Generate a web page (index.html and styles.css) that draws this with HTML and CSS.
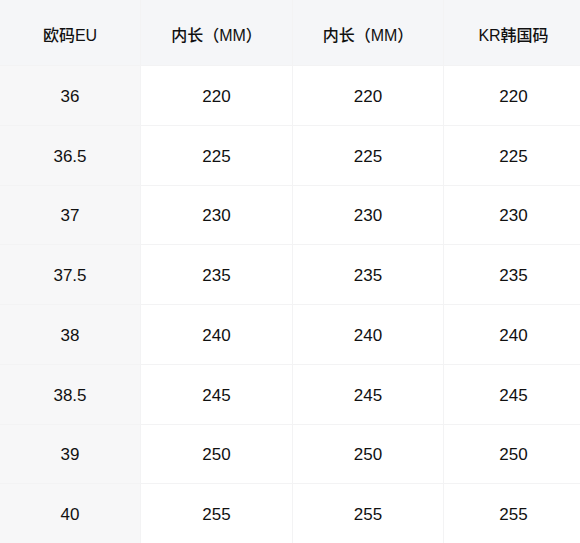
FILE: index.html
```html
<!DOCTYPE html>
<html lang="zh">
<head>
<meta charset="utf-8">
<title>尺码表</title>
<link rel="stylesheet" href="styles.css">
</head>
<body>
<div class="table">
  <div class="cell head first">欧码EU</div>
  <div class="cell head">内长（MM）</div>
  <div class="cell head">内长（MM）</div>
  <div class="cell head">KR韩国码</div>

  <div class="cell first">36</div><div class="cell">220</div><div class="cell">220</div><div class="cell">220</div>
  <div class="cell first">36.5</div><div class="cell">225</div><div class="cell">225</div><div class="cell">225</div>
  <div class="cell first">37</div><div class="cell">230</div><div class="cell">230</div><div class="cell">230</div>
  <div class="cell first">37.5</div><div class="cell">235</div><div class="cell">235</div><div class="cell">235</div>
  <div class="cell first">38</div><div class="cell">240</div><div class="cell">240</div><div class="cell">240</div>
  <div class="cell first">38.5</div><div class="cell">245</div><div class="cell">245</div><div class="cell">245</div>
  <div class="cell first">39</div><div class="cell">250</div><div class="cell">250</div><div class="cell">250</div>
  <div class="cell first">40</div><div class="cell">255</div><div class="cell">255</div><div class="cell">255</div>
</div>
</body>
</html>
```

FILE: styles.css
```css
html, body {
  margin: 0;
  padding: 0;
  background: #ffffff;
}

.table {
  width: 580px;
  height: 543px;
  display: grid;
  grid-template-columns: 140px 151px 150px 139px;
  grid-template-rows: 65px repeat(8, 1fr);
  background: #f3f3f4;
  gap: 1px;
  font-family: "Liberation Sans", "Noto Sans CJK SC", sans-serif;
  color: #111111;
}

.cell {
  display: flex;
  align-items: center;
  justify-content: center;
  padding-top: 3px;
  background: #ffffff;
  font-size: 17px;
}

.cell.first {
  background: #f7f7f8;
}

.cell.head {
  background: #f5f6f8;
  font-size: 16px;
  font-weight: 500;
}
```
